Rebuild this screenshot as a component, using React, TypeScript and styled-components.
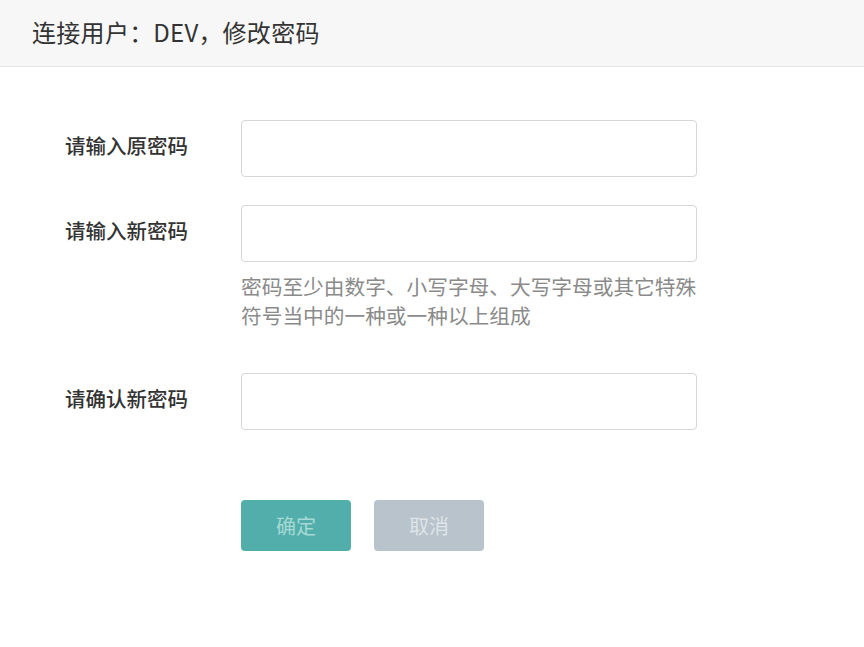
import styled, { createGlobalStyle } from 'styled-components'

const GlobalStyle = createGlobalStyle`
  html, body {
    margin: 0;
    padding: 0;
    background: #fff;
    font-family: "Noto Sans CJK SC", "Noto Sans", sans-serif;
  }
`

const Page = styled.div`
  width: 864px;
  min-height: 647px;
  background: #fff;
`

const Header = styled.div`
  box-sizing: border-box;
  height: 67px;
  display: flex;
  align-items: center;
  padding: 0 0 4px 32px;
  background: #f7f7f7;
  border-bottom: 1px solid #e6e6e6;
  font-size: 24px;
  color: #333;
  letter-spacing: 0.3px;
`

const Punct = styled.span`
  display: inline-block;
  width: 1em;
`

const Form = styled.div`
  display: grid;
  grid-template-columns: 176px 456px;
  padding: 53px 0 0 65px;
`

const Label = styled.div`
  height: 57px;
  display: flex;
  align-items: center;
  margin-top: -4px;
  font-size: 20.5px;
  font-weight: 500;
  color: #333;
`

const Field = styled.div<{ $gap: number }>`
  display: flex;
  flex-direction: column;
  margin-bottom: ${(p) => p.$gap}px;
`

const Input = styled.input`
  box-sizing: border-box;
  width: 456px;
  height: 57px;
  border: 1px solid #d4d6d9;
  border-radius: 4px;
  padding: 0 12px;
  font-size: 18px;
  outline: none;
`

const Hint = styled.div`
  margin-top: 10px;
  font-size: 20.7px;
  line-height: 29px;
  color: #8a8a8a;
  white-space: nowrap;
`

const Actions = styled.div`
  display: flex;
  gap: 23px;
`

const Button = styled.button<{ $kind: 'primary' | 'cancel' }>`
  width: 110px;
  height: 51px;
  border: none;
  border-radius: 4px;
  font-family: inherit;
  font-size: 20px;
  background: ${(p) => (p.$kind === 'primary' ? '#52aeaa' : '#b8c3cb')};
  color: ${(p) => (p.$kind === 'primary' ? '#a6d9d6' : '#dfe4e8')};
`

export default function App() {
  return (
    <Page lang="zh-CN">
      <GlobalStyle />
      <Header>
        连接用户<Punct>：</Punct>DEV<Punct>，</Punct>修改密码
      </Header>
      <Form>
        <Label>请输入原密码</Label>
        <Field $gap={28}>
          <Input type="password" />
        </Field>
        <Label>请输入新密码</Label>
        <Field $gap={43}>
          <Input type="password" />
          <Hint>
            密码至少由数字、小写字母、大写字母或其它特殊
            <br />
            符号当中的一种或一种以上组成
          </Hint>
        </Field>
        <Label>请确认新密码</Label>
        <Field $gap={70}>
          <Input type="password" />
        </Field>
        <div />
        <Actions>
          <Button $kind="primary">确定</Button>
          <Button $kind="cancel">取消</Button>
        </Actions>
      </Form>
    </Page>
  )
}
